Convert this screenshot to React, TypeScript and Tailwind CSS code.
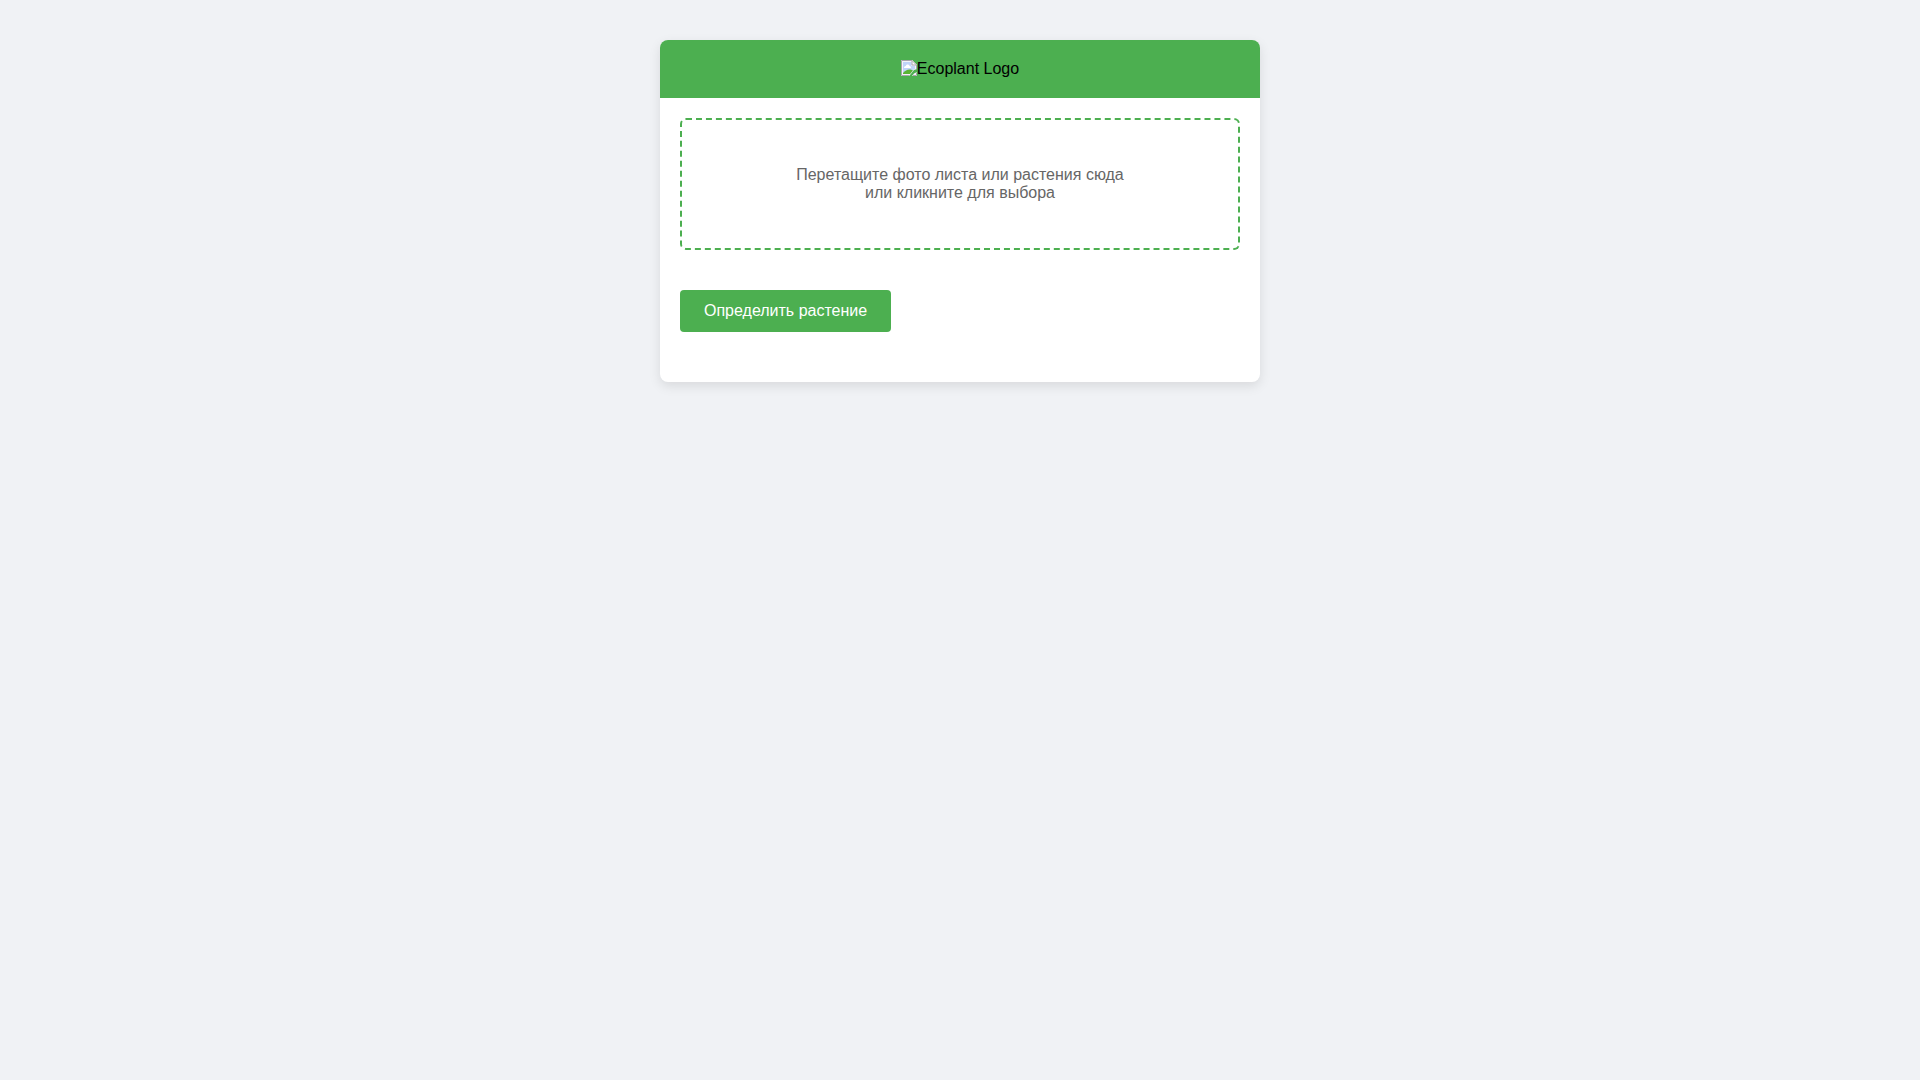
import React, { useRef, useState } from "react";

const LogoPlaceholder: React.FC = () => (
  <svg width="16" height="16" viewBox="0 0 16 16" aria-hidden="true" className="shrink-0">
    <path d="M0 0h11l5 5v4l-3 1-4 5-1 1H0z" fill="#f4f4f8" />
    <path d="M2 2h8.500v4H14v3l-2 1-3 4H2z" fill="#c0d4f8" />
    <path d="M3 8c0-1.300.8-2 1.800-2C5 4.800 6 4.200 7 4.500c1 .1 1.500.8 1.500 1.500C9.500 6 10 6.800 10 8z" fill="#ffffff" />
    <path d="M2 14v-1c2-2.300 4-3.500 6.500-3.500 1.500 0 2.500.5 3.500 1L9 14z" fill="#5ab435" />
    <path d="M11 0v5h5z" fill="#ffffff" />
    <path d="M16 12v4h-5l2-2.500z" fill="#f4f4f8" />
    <path
      d="M8 15.500H.5V.5H11l4.500 4.500v4M11 .5V5h4.500M15.500 12.500v3H12"
      fill="none"
      stroke="#a8a4ac"
      strokeWidth="1"
    />
  </svg>
);

const App: React.FC = () => {
  const [file, setFile] = useState<File | null>(null);
  const inputRef = useRef<HTMLInputElement>(null);

  const handleDrop = (e: React.DragEvent<HTMLLabelElement>) => {
    e.preventDefault();
    if (e.dataTransfer.files.length > 0) {
      setFile(e.dataTransfer.files[0]);
    }
  };

  const handleIdentify = () => {
    if (!file) {
      inputRef.current?.click();
    }
  };

  return (
    <div className="min-h-screen bg-[#f0f2f5] py-10 font-['Liberation_Sans',Arial,sans-serif] text-base leading-[18px] text-black">
      <div className="mx-auto max-w-[600px] overflow-hidden rounded-lg bg-white shadow-[0_4px_12px_rgba(0,0,0,0.1)]">
        <header className="flex items-start justify-center bg-[#4caf50] p-5">
          <LogoPlaceholder />
          <span>Ecoplant Logo</span>
        </header>

        <main className="px-5 pt-5 pb-[50px]">
          <label
            htmlFor="plant-photo"
            onDragOver={(e) => e.preventDefault()}
            onDrop={handleDrop}
            className="relative block cursor-pointer rounded-md border-2 border-dashed border-[#4caf50] px-10 py-[46px] text-center text-[#666]"
          >
            Перетащите фото листа или растения сюда
            <br />
            или кликните для выбора
            <input
              ref={inputRef}
              id="plant-photo"
              type="file"
              accept="image/*"
              className="sr-only"
              onChange={(e) => setFile(e.target.files?.[0] ?? null)}
            />
          </label>

          <button
            type="button"
            onClick={handleIdentify}
            className="mt-10 block cursor-pointer rounded bg-[#4caf50] px-6 py-3 text-white hover:bg-[#43a047]"
          >
            Определить растение
          </button>
        </main>
      </div>
    </div>
  );
};

export default App;
